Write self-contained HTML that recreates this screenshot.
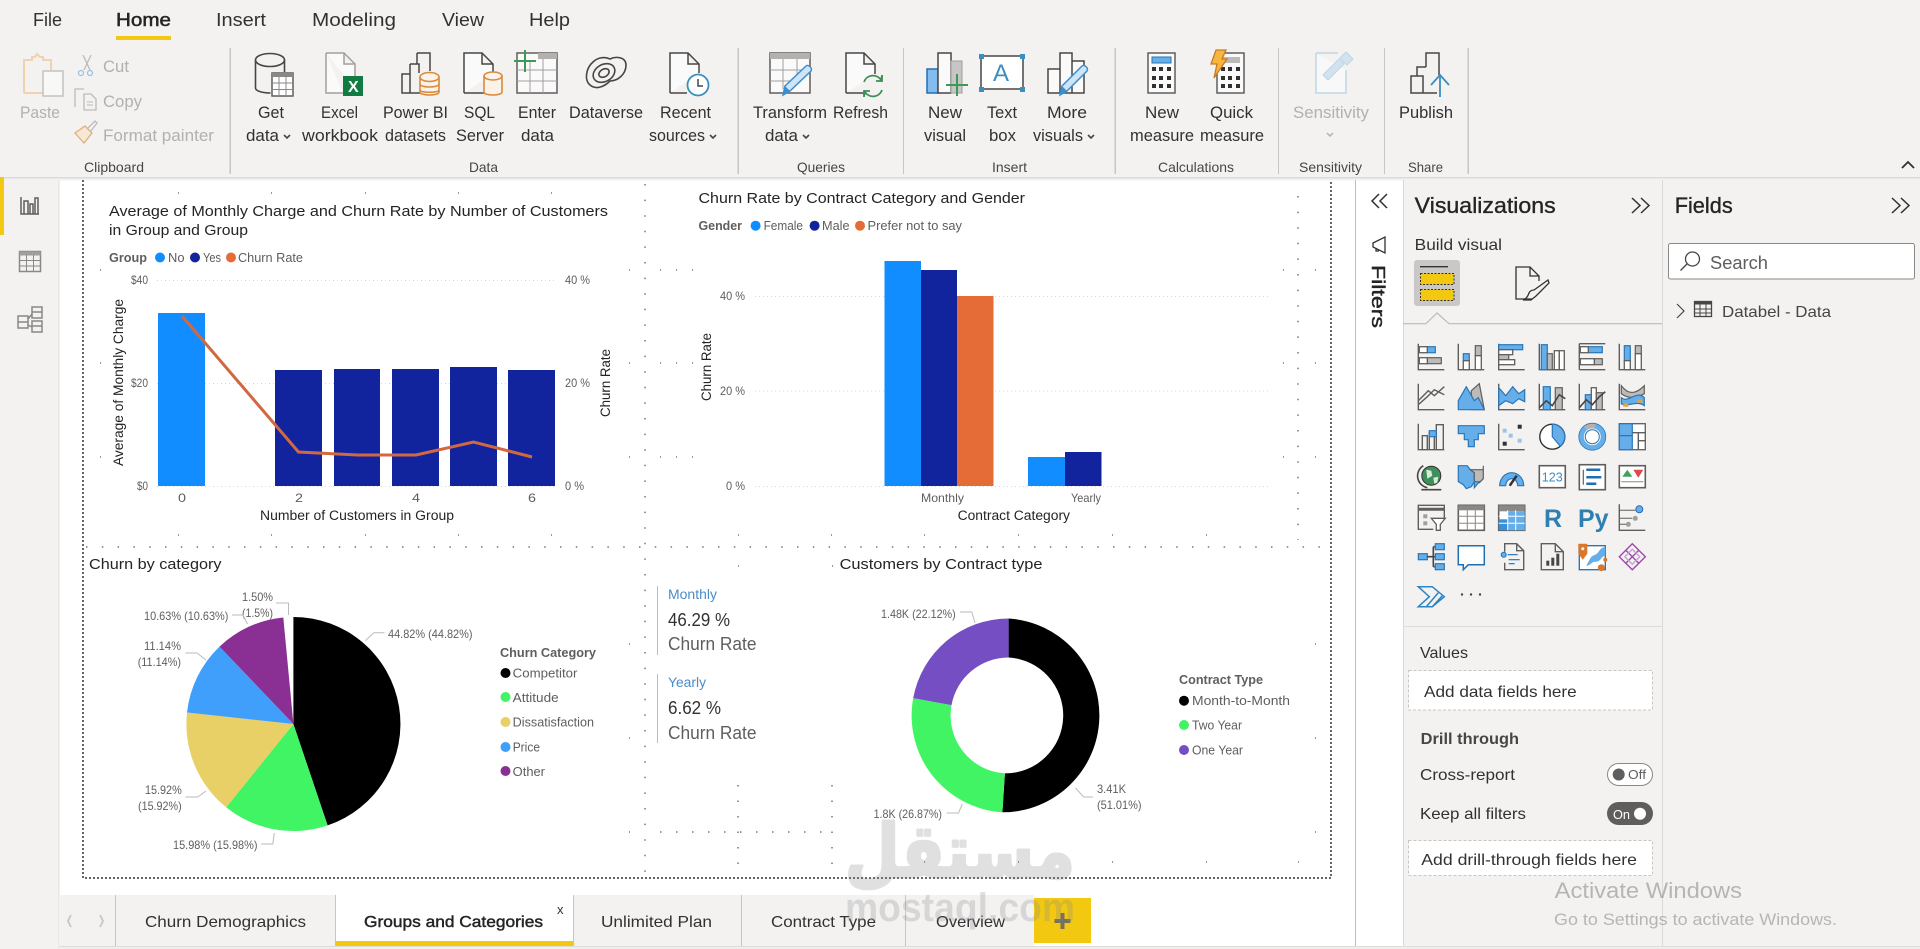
<!DOCTYPE html>
<html lang="en"><head><meta charset="utf-8"><title>Power BI Desktop</title>
<style>
html,body{margin:0;padding:0;width:1920px;height:949px;overflow:hidden;background:#fff}
svg{display:block}
text{font-family:"Liberation Sans","DejaVu Sans",sans-serif;fill:#323130}
.tab{font-size:18px}.lb{font-size:16.5px}.gr{font-size:14px;fill:#484644}.dis{fill:#b3b0ad}
.ti{font-size:15px;fill:#252423}.lg{font-size:12.5px;fill:#605e5c}.lgb{font-size:12.5px;font-weight:bold;fill:#605e5c}
.ax{font-size:12px;fill:#605e5c}.at{font-size:13.5px;fill:#252423}.pl{font-size:12px;fill:#605e5c}
.md{stroke:#252423;stroke-width:.35;fill:#252423}
.ld{fill:none;stroke:#bdbbb9;stroke-width:1}
.grid{stroke:#d5d5d5;stroke-width:1;stroke-dasharray:1 3}
.dt{stroke:#666;stroke-width:1.5;fill:none}
.i{fill:none;stroke:#605e5c;stroke-width:1.4}
.id{fill:none;stroke:#484644;stroke-width:1.6}
.w{fill:#fff;stroke:#605e5c;stroke-width:1.3}
.b{fill:#65aeea;stroke:#2a76b5;stroke-width:1.2}
.g{fill:#bdbbb9;stroke:#605e5c;stroke-width:1.2}
.or{fill:#fbf3ea;stroke:#d98a3c;stroke-width:1.6}
.s{font-size:16px}
</style></head><body>
<svg width="1920" height="949" viewBox="0 0 1920 949" xmlns="http://www.w3.org/2000/svg">
<rect width="1920" height="949" fill="#fff"/>
<!-- ribbon -->
<rect x="0" y="0" width="1920" height="177" fill="#f3f2f1"/>
<rect x="0" y="177" width="1920" height="1.5" fill="#dcdbda"/>
<rect x="0" y="178.5" width="1920" height="2" fill="#f2f2f2"/>
<text x="33" y="26" class="tab" textLength="29" lengthAdjust="spacingAndGlyphs">File</text>
<text x="116" y="26" class="tab md" style="stroke-width:.5" textLength="55" lengthAdjust="spacingAndGlyphs">Home</text>
<text x="216" y="26" class="tab" textLength="50" lengthAdjust="spacingAndGlyphs">Insert</text>
<text x="312" y="26" class="tab" textLength="84" lengthAdjust="spacingAndGlyphs">Modeling</text>
<text x="442" y="26" class="tab" textLength="42" lengthAdjust="spacingAndGlyphs">View</text>
<text x="529" y="26" class="tab" textLength="41" lengthAdjust="spacingAndGlyphs">Help</text>
<rect x="116" y="36" width="55" height="4" fill="#f2c811"/>
<!-- separators -->
<g fill="#c8c6c4"><rect x="229.5" y="48" width="1.5" height="126"/><rect x="737.5" y="48" width="1.5" height="126"/><rect x="903" y="48" width="1" height="126"/><rect x="1114.5" y="48" width="1.5" height="126"/><rect x="1278" y="48" width="1" height="126"/><rect x="1384" y="48" width="1" height="126"/><rect x="1467.5" y="48" width="1.5" height="126"/></g>
<!-- clipboard -->
<path d="M24 93V60h8v-3h3l2-3 3 3h3v3h8v10" fill="none" stroke="#efd3b0" stroke-width="2"/><path d="M24 93h19" stroke="#efd3b0" stroke-width="2"/>
<rect x="43" y="71" width="20" height="25" fill="#f8f8f7" stroke="#c4c2c0" stroke-width="1.5"/>
<text x="20" y="118" class="lb dis" textLength="40" lengthAdjust="spacingAndGlyphs">Paste</text>
<path d="M83 55l7 15M91 55l-7 15" stroke="#bdbbb9" stroke-width="1.3" fill="none"/><circle cx="81" cy="73" r="2.5" fill="none" stroke="#9cc3e0" stroke-width="1.3"/><circle cx="90" cy="73" r="2.5" fill="none" stroke="#9cc3e0" stroke-width="1.3"/>
<text x="103" y="72" class="lb dis" textLength="26" lengthAdjust="spacingAndGlyphs">Cut</text>
<path d="M75 107V89h9M84 94h7l5 5v11H84z" fill="none" stroke="#bdbbb9" stroke-width="1.3"/><path d="M87 102h6M87 105h6" stroke="#bdbbb9"/>
<text x="103" y="107" class="lb dis" textLength="39" lengthAdjust="spacingAndGlyphs">Copy</text>
<path d="M75 133l10-7 7 7-8 10z" fill="#f7e8d6" stroke="#e0b078" stroke-width="1.3"/><path d="M87 129l8-8 2 2-7 9" fill="none" stroke="#bdbbb9" stroke-width="1.3"/>
<text x="103" y="141" class="lb dis" textLength="111" lengthAdjust="spacingAndGlyphs">Format painter</text>
<text x="84" y="172" class="gr" textLength="60" lengthAdjust="spacingAndGlyphs">Clipboard</text>
<!-- get data -->
<path d="M255.5 60v28c0 3 7 5 15 5" class="id" /><ellipse cx="270" cy="60" rx="14.5" ry="6.5" class="id" fill="#fff"/><path d="M284.5 60v12" class="id"/>
<rect x="272" y="73" width="21" height="23" fill="#fff" stroke="#605e5c" stroke-width="1.5"/><rect x="272" y="73" width="21" height="4" fill="#8a8886"/><path d="M272 83h21M272 89.500h21M279 77v19M286 77v19" stroke="#8a8886" fill="none"/>
<text x="258" y="118" class="lb" textLength="26" lengthAdjust="spacingAndGlyphs">Get</text>
<text x="246" y="141" class="lb" textLength="33" lengthAdjust="spacingAndGlyphs">data</text><path d="M284 135l3 3 3-3" class="id"/>
<!-- excel -->
<path d="M326 53h18l11 11v25M344 53v11h11M326 53v40h17" fill="#fafafa" stroke="#a19f9d" stroke-width="1.5"/>
<rect x="343" y="76" width="20" height="20" fill="#107c41"/><text x="348" y="92" style="font-size:16px;font-weight:bold;fill:#fff">X</text>
<text x="321" y="118" class="lb" textLength="37" lengthAdjust="spacingAndGlyphs">Excel</text>
<text x="302" y="141" class="lb" textLength="76" lengthAdjust="spacingAndGlyphs">workbook</text>
<!-- pbi datasets -->
<path d="M402 74h8v19h-8zM410 64h9v9M417 53h13v18M417 53v11M410 64v10M410 93h10" fill="none" stroke="#484644" stroke-width="1.5"/>
<path d="M420 77v15c0 4 19 4 19 0V77" class="or"/><ellipse cx="429.500" cy="77" rx="9.500" ry="4.500" class="or"/><path d="M420 84c0 4 19 4 19 0M420 90c0 3 19 3 19 0" fill="none" stroke="#d98a3c" stroke-width="1.500"/>
<text x="383" y="118" class="lb" textLength="65" lengthAdjust="spacingAndGlyphs">Power BI</text>
<text x="385" y="141" class="lb" textLength="61" lengthAdjust="spacingAndGlyphs">datasets</text>
<!-- sql -->
<path d="M464 93V53h18l11 11v9M482 53v11h11M464 93h20" fill="#fafafa" stroke="#484644" stroke-width="1.500"/>
<path d="M484 76v16c0 4 18 4 18 0V76" class="or"/><ellipse cx="493" cy="76" rx="9" ry="4" class="or"/>
<text x="464" y="118" class="lb" textLength="31" lengthAdjust="spacingAndGlyphs">SQL</text>
<text x="456" y="141" class="lb" textLength="48" lengthAdjust="spacingAndGlyphs">Server</text>
<!-- enter -->
<rect x="517" y="53" width="40" height="40" fill="#fafafa" stroke="#605e5c" stroke-width="1.500"/><rect x="538" y="53" width="19" height="6" fill="#b3b0ad"/><path d="M517 70h40M517 81h40M530 60v33M543 59v34" stroke="#a19f9d" fill="none"/>
<path d="M514 61h22M525 50v22" stroke="#3b9a56" stroke-width="2" fill="none"/>
<text x="518" y="118" class="lb" textLength="38" lengthAdjust="spacingAndGlyphs">Enter</text>
<text x="521" y="141" class="lb" textLength="33" lengthAdjust="spacingAndGlyphs">data</text>
<!-- dataverse -->
<path d="M593 62C586 68 584 80 590 85C596 90 604 87 610 81C617 81 626 75 626 65C626 57 616 56 610 59C604 56 597 58 593 62Z" class="id"/><ellipse cx="604" cy="73" rx="11.500" ry="8.500" transform="rotate(-30 604 73)" class="id"/><ellipse cx="604" cy="73" rx="5.500" ry="3.800" transform="rotate(-30 604 73)" class="id"/>
<text x="569" y="118" class="lb" textLength="74" lengthAdjust="spacingAndGlyphs">Dataverse</text>
<!-- recent -->
<path d="M670 93V53h18l11 11v9M688 53v11h11M670 93h17" fill="#fafafa" stroke="#484644" stroke-width="1.500"/>
<circle cx="698" cy="85" r="10.500" fill="#fff" stroke="#3a8fbf" stroke-width="1.800"/><path d="M698 79v7h5" fill="none" stroke="#484644" stroke-width="1.500"/>
<text x="660" y="118" class="lb" textLength="51" lengthAdjust="spacingAndGlyphs">Recent</text>
<text x="649" y="141" class="lb" textLength="56" lengthAdjust="spacingAndGlyphs">sources</text><path d="M710 135l3 3 3-3" class="id"/>
<text x="469" y="172" class="gr" textLength="29" lengthAdjust="spacingAndGlyphs">Data</text>
<!-- transform -->
<rect x="770" y="53" width="40" height="40" fill="#fafafa" stroke="#605e5c" stroke-width="1.500"/><rect x="770" y="53" width="40" height="6" fill="#b3b0ad"/><path d="M770 70h40M770 81h27M783 59v30M797 59v22" stroke="#a19f9d" fill="none"/>
<path d="M783 95l2-9 21-20c2-2 7 2 5 5l-21 20z" fill="#cfe4f7" stroke="#3a8fd0" stroke-width="1.500"/><path d="M783 95l2-9 5 5z" fill="#3a8fd0"/>
<text x="753" y="118" class="lb" textLength="74" lengthAdjust="spacingAndGlyphs">Transform</text>
<text x="765" y="141" class="lb" textLength="33" lengthAdjust="spacingAndGlyphs">data</text><path d="M803 135l3 3 3-3" class="id"/>
<!-- refresh -->
<path d="M846 93V53h18l11 11v10M864 53v11h11M846 93h18" fill="#fafafa" stroke="#484644" stroke-width="1.500"/>
<path d="M864 82a9.500 9.500 0 0 1 17-2l1-4M882 90a9.500 9.500 0 0 1-17 2l-1 4" fill="none" stroke="#3b8f55" stroke-width="1.800"/><path d="M882 75v6h-6M864 97v-6h6" fill="none" stroke="#3b8f55" stroke-width="1.800"/>
<text x="833" y="118" class="lb" textLength="55" lengthAdjust="spacingAndGlyphs">Refresh</text>
<text x="797" y="172" class="gr" textLength="48" lengthAdjust="spacingAndGlyphs">Queries</text>
<!-- new visual -->
<rect x="927" y="69" width="11" height="24" fill="#83bdf0" stroke="#1f6fb5" stroke-width="1.500"/><rect x="938" y="53" width="13" height="40" fill="#fafafa" stroke="#484644" stroke-width="1.500"/><rect x="951" y="61" width="11" height="32" fill="#c8c6c4" stroke="#a19f9d"/>
<path d="M946 85h22M957 74v22" stroke="#3b9a56" stroke-width="2" fill="none"/>
<text x="928" y="118" class="lb" textLength="34" lengthAdjust="spacingAndGlyphs">New</text>
<text x="924" y="141" class="lb" textLength="42" lengthAdjust="spacingAndGlyphs">visual</text>
<!-- text box -->
<rect x="981" y="56" width="42" height="33" fill="#fff" stroke="#484644" stroke-width="1.500"/><g fill="#3a8fbf"><rect x="979" y="54" width="5" height="5"/><rect x="1020" y="54" width="5" height="5"/><rect x="979" y="87" width="5" height="5"/><rect x="1020" y="87" width="5" height="5"/></g>
<text x="993" y="81" style="font-size:24px;fill:#3a8fbf">A</text>
<text x="987" y="118" class="lb" textLength="30" lengthAdjust="spacingAndGlyphs">Text</text>
<text x="989" y="141" class="lb" textLength="27" lengthAdjust="spacingAndGlyphs">box</text>
<!-- more visuals -->
<path d="M1048 69h12v24h-12zM1060 53h12v40h-12zM1072 61h12v32h-12z" fill="#fafafa" stroke="#484644" stroke-width="1.500"/>
<path d="M1060 95l2-9 20-20c2-2 7 2 5 5l-20 20z" fill="#cfe4f7" stroke="#3a8fd0" stroke-width="1.500"/><path d="M1060 95l2-9 5 5z" fill="#3a8fd0"/>
<text x="1047" y="118" class="lb" textLength="40" lengthAdjust="spacingAndGlyphs">More</text>
<text x="1033" y="141" class="lb" textLength="50" lengthAdjust="spacingAndGlyphs">visuals</text><path d="M1088 135l3 3 3-3" class="id"/>
<text x="992" y="172" class="gr" textLength="35" lengthAdjust="spacingAndGlyphs">Insert</text>
<!-- new measure -->
<rect x="1148" y="53" width="27" height="40" fill="#fafafa" stroke="#605e5c" stroke-width="1.500"/><rect x="1152" y="57" width="19" height="6" fill="#65aeea" stroke="#2a76b5"/>
<g fill="#323130"><rect x="1152" y="67" width="4" height="4"/><rect x="1159" y="67" width="4" height="4"/><rect x="1167" y="67" width="4" height="4"/><rect x="1152" y="76" width="4" height="4"/><rect x="1159" y="76" width="4" height="4"/><rect x="1167" y="76" width="4" height="4"/><rect x="1152" y="84" width="4" height="4"/><rect x="1159" y="84" width="4" height="4"/><rect x="1167" y="84" width="4" height="4"/></g>
<text x="1145" y="118" class="lb" textLength="34" lengthAdjust="spacingAndGlyphs">New</text>
<text x="1130" y="141" class="lb" textLength="64" lengthAdjust="spacingAndGlyphs">measure</text>
<!-- quick -->
<rect x="1217" y="53" width="27" height="40" fill="#fafafa" stroke="#605e5c" stroke-width="1.500"/><rect x="1223" y="57" width="17" height="6" fill="#bdbbb9"/>
<g fill="#323130"><rect x="1221" y="67" width="4" height="4"/><rect x="1228" y="67" width="4" height="4"/><rect x="1236" y="67" width="4" height="4"/><rect x="1221" y="76" width="4" height="4"/><rect x="1228" y="76" width="4" height="4"/><rect x="1236" y="76" width="4" height="4"/><rect x="1221" y="84" width="4" height="4"/><rect x="1228" y="84" width="4" height="4"/><rect x="1236" y="84" width="4" height="4"/></g>
<path d="M1216 50h10l-4 9h5l-13 19 3-14h-6z" fill="#f6b73c" stroke="#c9792b" stroke-width="1.300"/>
<text x="1210" y="118" class="lb" textLength="43" lengthAdjust="spacingAndGlyphs">Quick</text>
<text x="1200" y="141" class="lb" textLength="64" lengthAdjust="spacingAndGlyphs">measure</text>
<text x="1158" y="172" class="gr" textLength="76" lengthAdjust="spacingAndGlyphs">Calculations</text>
<!-- sensitivity -->
<path d="M1316 53h22M1316 53v40h30V70" fill="#f8f8f8" stroke="#bcd6e6" stroke-width="1.500"/><path d="M1323 75l16-16 5 5-16 16zM1340 58l6-6 7 7-6 6z" fill="#d3e3ed" stroke="#bcd6e6"/>
<text x="1293" y="118" class="lb dis" textLength="76" lengthAdjust="spacingAndGlyphs">Sensitivity</text><path d="M1327 133l3 3 3-3" fill="none" stroke="#b3b0ad" stroke-width="1.500"/>
<text x="1299" y="172" class="gr" textLength="63" lengthAdjust="spacingAndGlyphs">Sensitivity</text>
<!-- publish -->
<path d="M1411 76h12v17h-12zM1417 76v-9h9M1426 67V53h13v22M1423 93h14" fill="none" stroke="#484644" stroke-width="1.500"/>
<path d="M1440 97V75M1431 85l9-10 9 10" fill="none" stroke="#3a8fbf" stroke-width="1.800"/>
<text x="1399" y="118" class="lb" textLength="54" lengthAdjust="spacingAndGlyphs">Publish</text>
<text x="1408" y="172" class="gr" textLength="35" lengthAdjust="spacingAndGlyphs">Share</text>
<path d="M1902 168l6-6 6 6" fill="none" stroke="#323130" stroke-width="1.800"/>
<!-- left nav -->
<rect x="0" y="180" width="59" height="769" fill="#f3f2f1"/><rect x="58.500" y="180" width="1" height="769" fill="#e1dfdd"/>
<rect x="0" y="177" width="4" height="58" fill="#f2c811"/>
<path d="M21 197v17h18M24 201h4v13h-4zM30 204h3v10h-3zM35 198h3v16h-3z" fill="none" stroke="#605e5c" stroke-width="1.500"/>
<rect x="19.500" y="251.500" width="21" height="20" fill="none" stroke="#8a8886" stroke-width="1.500"/><rect x="19.500" y="251.500" width="21" height="4" fill="#a19f9d"/><path d="M19 260.500h22M19 266h22M26.500 255v16M33.500 255v16" stroke="#8a8886" fill="none"/>
<path d="M18 316h10v12H18zM32 307h10v11H32zM32 321h10v11H32zM28 319l4-5M28 325l4 2M18 322h10M32 312h10M32 326h10" fill="none" stroke="#8a8886" stroke-width="1.500"/>
<!-- canvas guides -->
<path class="dt" style="stroke-width:2;stroke-dasharray:2 2" d="M83 180V878H1331V180"/>
<g fill="none" stroke="#777" stroke-width="1.500">
<path d="M645 184V876" stroke-dasharray="1.500 14.100"/>
<path d="M86 547H1330" stroke-dasharray="1.500 14.300"/>
<path d="M178 193h1M271 193h1M365 193h1M458 193h1M551 193h1M178 535h1M271 535h1M365 535h1M458 535h1M551 535h1M100 270h1M100 363h1M100 457h1M629 270h1M629 363h1M629 457h1"/>
<path d="M660 270h1M676 270h1M692 270h1M660 363h1M676 363h1M692 363h1M660 457h1M676 457h1M692 457h1M1283 270h1M1315 270h1M1283 363h1M1315 363h1M1283 457h1M1315 457h1"/>
<path d="M1298 196V540" stroke-dasharray="1.500 14.100"/>
<path d="M738 535h1M831 535h1M924 535h1M1018 535h1M1112 535h1M1206 535h1"/>
<path d="M629 644h1M629 738h1M629 832h1M738 566h1M832 566h1M1315 644h1M1315 738h1M1315 832h1"/>
<path d="M738 785V870M832 785V870" stroke-dasharray="1.500 14"/>
<path d="M660 832H830" stroke-dasharray="1.500 14.500"/>
<path d="M924 862h1M1018 862h1M1112 862h1M1206 862h1M1298 862h1"/>
</g>
<!-- chart 1 -->
<text x="109" y="216" class="ti" textLength="499" lengthAdjust="spacingAndGlyphs">Average of Monthly Charge and Churn Rate by Number of Customers</text>
<text x="109" y="235" class="ti" textLength="139" lengthAdjust="spacingAndGlyphs">in Group and Group</text>
<text x="109" y="262" class="lgb" textLength="38" lengthAdjust="spacingAndGlyphs">Group</text>
<circle cx="160" cy="257.500" r="5" fill="#118dff"/><text x="168" y="262" class="lg" textLength="16.500" lengthAdjust="spacingAndGlyphs">No</text>
<circle cx="195" cy="257.500" r="5" fill="#12239e"/><text x="203" y="262" class="lg" textLength="18" lengthAdjust="spacingAndGlyphs">Yes</text>
<circle cx="231" cy="257.500" r="5" fill="#e66c37"/><text x="238" y="262" class="lg" textLength="65" lengthAdjust="spacingAndGlyphs">Churn Rate</text>
<path class="grid" d="M157 280.500H556M157 383.500H556M157 486.500H556"/>
<text x="131" y="284" class="ax" textLength="17" lengthAdjust="spacingAndGlyphs">$40</text>
<text x="131" y="387" class="ax" textLength="17" lengthAdjust="spacingAndGlyphs">$20</text>
<text x="137" y="490" class="ax" textLength="11" lengthAdjust="spacingAndGlyphs">$0</text>
<text x="565" y="284" class="ax" textLength="25" lengthAdjust="spacingAndGlyphs">40 %</text>
<text x="565" y="387" class="ax" textLength="25" lengthAdjust="spacingAndGlyphs">20 %</text>
<text x="565" y="490" class="ax" textLength="19" lengthAdjust="spacingAndGlyphs">0 %</text>
<rect x="158" y="313" width="47" height="173" fill="#118dff"/>
<g fill="#12239e"><rect x="275" y="370" width="47" height="116"/><rect x="334" y="369" width="46" height="117"/><rect x="392" y="369" width="47" height="117"/><rect x="450" y="367" width="47" height="119"/><rect x="508" y="370" width="47" height="116"/></g>
<polyline points="182,316 298.500,452 357.400,455 416,455 473.500,442 532,457" fill="none" stroke="#d2683f" stroke-width="3"/>
<text x="178" y="502" class="ax" textLength="8" lengthAdjust="spacingAndGlyphs">0</text><text x="295" y="502" class="ax" textLength="8" lengthAdjust="spacingAndGlyphs">2</text><text x="412" y="502" class="ax" textLength="8" lengthAdjust="spacingAndGlyphs">4</text><text x="528" y="502" class="ax" textLength="8" lengthAdjust="spacingAndGlyphs">6</text>
<text x="260" y="520" class="at" textLength="194" lengthAdjust="spacingAndGlyphs">Number of Customers in Group</text>
<text transform="translate(123,466) rotate(-90)" class="at" textLength="167" lengthAdjust="spacingAndGlyphs">Average of Monthly Charge</text>
<text transform="translate(610,417) rotate(-90)" class="at" textLength="68" lengthAdjust="spacingAndGlyphs">Churn Rate</text>
<!-- chart 2 -->
<text x="698.500" y="203" class="ti" textLength="326.500" lengthAdjust="spacingAndGlyphs">Churn Rate by Contract Category and Gender</text>
<text x="698.500" y="230" class="lgb" textLength="43.500" lengthAdjust="spacingAndGlyphs">Gender</text>
<circle cx="755.600" cy="225.700" r="5" fill="#118dff"/><text x="763.600" y="230" class="lg" textLength="39.400" lengthAdjust="spacingAndGlyphs">Female</text>
<circle cx="814.600" cy="225.700" r="5" fill="#12239e"/><text x="822" y="230" class="lg" textLength="27.500" lengthAdjust="spacingAndGlyphs">Male</text>
<circle cx="860" cy="225.700" r="5" fill="#e66c37"/><text x="867.500" y="230" class="lg" textLength="94.500" lengthAdjust="spacingAndGlyphs">Prefer not to say</text>
<path class="grid" d="M755 296.500H1270M755 391H1270M755 486.500H1270"/>
<text x="720" y="300" class="ax" textLength="25" lengthAdjust="spacingAndGlyphs">40 %</text><text x="720" y="395" class="ax" textLength="25" lengthAdjust="spacingAndGlyphs">20 %</text><text x="726" y="490" class="ax" textLength="19" lengthAdjust="spacingAndGlyphs">0 %</text>
<rect x="884.500" y="261" width="36.500" height="225" fill="#118dff"/><rect x="921" y="270" width="36" height="216" fill="#12239e"/><rect x="957" y="296" width="36.500" height="190" fill="#e66c37"/>
<rect x="1028" y="457" width="37" height="29" fill="#118dff"/><rect x="1065" y="452" width="36.500" height="34" fill="#12239e"/>
<text x="921" y="502" class="ax" textLength="43" lengthAdjust="spacingAndGlyphs">Monthly</text><text x="1071" y="502" class="ax" textLength="30" lengthAdjust="spacingAndGlyphs">Yearly</text>
<text x="957.600" y="520" class="at" textLength="112.400" lengthAdjust="spacingAndGlyphs">Contract Category</text>
<text transform="translate(711,401) rotate(-90)" class="at" textLength="68" lengthAdjust="spacingAndGlyphs">Churn Rate</text>
<!-- pie -->
<text x="89" y="569" class="ti" textLength="132.500" lengthAdjust="spacingAndGlyphs">Churn by category</text>
<path d="M293.400 724V617A107 107 0 0 1 327.600 825.400Z" fill="#000"/>
<path d="M293.400 724L327.600 825.400A107 107 0 0 1 226.200 807.300Z" fill="#41f463"/>
<path d="M293.400 724L226.200 807.300A107 107 0 0 1 187 712.500Z" fill="#e8cf66"/>
<path d="M293.400 724L187 712.500A107 107 0 0 1 219.500 646.600Z" fill="#3f9ffb"/>
<path d="M293.400 724L219.500 646.600A107 107 0 0 1 283.300 617.500Z" fill="#8a3094"/>
<text x="388" y="638" class="pl" textLength="84.500" lengthAdjust="spacingAndGlyphs">44.82% (44.82%)</text>
<path class="ld" d="M365.400 640.700L373.800 632.700H384.500"/>
<text x="242" y="601" class="pl" textLength="31" lengthAdjust="spacingAndGlyphs">1.50%</text><text x="242" y="617" class="pl" textLength="31" lengthAdjust="spacingAndGlyphs">(1.5%)</text>
<path class="ld" d="M276 603H288.500V615"/>
<text x="144" y="620" class="pl" textLength="84.400" lengthAdjust="spacingAndGlyphs">10.63% (10.63%)</text>
<path class="ld" d="M232 615H243L247.500 624"/>
<text x="144" y="650" class="pl" textLength="37" lengthAdjust="spacingAndGlyphs">11.14%</text><text x="137.700" y="666" class="pl" textLength="43.300" lengthAdjust="spacingAndGlyphs">(11.14%)</text>
<path class="ld" d="M185.500 653H197L206 660"/>
<text x="145" y="794" class="pl" textLength="36.700" lengthAdjust="spacingAndGlyphs">15.92%</text><text x="138" y="810" class="pl" textLength="43.700" lengthAdjust="spacingAndGlyphs">(15.92%)</text>
<path class="ld" d="M185.500 797H197.800L206 791"/>
<text x="173" y="849" class="pl" textLength="84.500" lengthAdjust="spacingAndGlyphs">15.98% (15.98%)</text>
<path class="ld" d="M261 844H272.800L274.300 833"/>
<text x="500" y="657" class="lgb" textLength="96" lengthAdjust="spacingAndGlyphs">Churn Category</text>
<circle cx="505.500" cy="673" r="5" fill="#000"/><text x="512.700" y="677.500" class="lg" textLength="64.700" lengthAdjust="spacingAndGlyphs">Competitor</text>
<circle cx="505.500" cy="697" r="5" fill="#41f463"/><text x="512.700" y="702" class="lg" textLength="46" lengthAdjust="spacingAndGlyphs">Attitude</text>
<circle cx="505.500" cy="722" r="5" fill="#e8cf66"/><text x="512.700" y="726.500" class="lg" textLength="81.300" lengthAdjust="spacingAndGlyphs">Dissatisfaction</text>
<circle cx="505.500" cy="747" r="5" fill="#3f9ffb"/><text x="512.700" y="751.500" class="lg" textLength="27.300" lengthAdjust="spacingAndGlyphs">Price</text>
<circle cx="505.500" cy="771" r="5" fill="#8a3094"/><text x="512.700" y="776" class="lg" textLength="32.300" lengthAdjust="spacingAndGlyphs">Other</text>
<!-- kpi -->
<rect x="657" y="586" width="1" height="69" fill="#bbb"/><rect x="657" y="674" width="1" height="69" fill="#bbb"/>
<text x="668" y="599" style="font-size:13.500px;fill:#4a8cc8" textLength="49" lengthAdjust="spacingAndGlyphs">Monthly</text>
<text x="668" y="626" style="font-size:18px;fill:#323130" textLength="62" lengthAdjust="spacingAndGlyphs">46.29 %</text>
<text x="668" y="650" style="font-size:18px;fill:#605e5c" textLength="88.500" lengthAdjust="spacingAndGlyphs">Churn Rate</text>
<text x="668" y="687" style="font-size:13.500px;fill:#4a8cc8" textLength="38" lengthAdjust="spacingAndGlyphs">Yearly</text>
<text x="668" y="714" style="font-size:18px;fill:#323130" textLength="53" lengthAdjust="spacingAndGlyphs">6.62 %</text>
<text x="668" y="739" style="font-size:18px;fill:#605e5c" textLength="88.500" lengthAdjust="spacingAndGlyphs">Churn Rate</text>
<!-- donut -->
<text x="839.600" y="569" class="ti" textLength="202.900" lengthAdjust="spacingAndGlyphs">Customers by Contract type</text>
<path d="M1008.600 618.500A97 97 0 0 1 1002.400 812.300L1004.900 773.400A58 58 0 0 0 1008.600 657.500Z" fill="#000"/>
<path d="M1002.400 812.300A97 97 0 0 1 913.200 698.100L951.500 705.100A58 58 0 0 0 1004.900 773.400Z" fill="#41f463"/>
<path d="M913.200 698.100A97 97 0 0 1 1008.600 618.500V657.500A58 58 0 0 0 951.500 705.100Z" fill="#744ec2"/>
<text x="881" y="618" class="pl" textLength="74.700" lengthAdjust="spacingAndGlyphs">1.48K (22.12%)</text><path class="ld" d="M960 612H971.800L975 623"/>
<text x="873.600" y="818" class="pl" textLength="68.400" lengthAdjust="spacingAndGlyphs">1.8K (26.87%)</text><path class="ld" d="M946.700 813H958.500L962.300 804"/>
<text x="1097" y="793" class="pl" textLength="29" lengthAdjust="spacingAndGlyphs">3.41K</text><text x="1097" y="809" class="pl" textLength="44.600" lengthAdjust="spacingAndGlyphs">(51.01%)</text><path class="ld" d="M1075.600 788L1083.600 797H1093"/>
<text x="1179" y="684" class="lgb" textLength="84" lengthAdjust="spacingAndGlyphs">Contract Type</text>
<circle cx="1184" cy="700.700" r="5" fill="#000"/><text x="1192" y="705" class="lg" textLength="98" lengthAdjust="spacingAndGlyphs">Month-to-Month</text>
<circle cx="1184" cy="725" r="5" fill="#41f463"/><text x="1192" y="729.500" class="lg" textLength="50" lengthAdjust="spacingAndGlyphs">Two Year</text>
<circle cx="1184" cy="750" r="5" fill="#744ec2"/><text x="1192" y="754.500" class="lg" textLength="51" lengthAdjust="spacingAndGlyphs">One Year</text>
<!-- tabs -->
<rect x="59" y="895" width="975" height="52" fill="#f3f2f1"/>
<rect x="335" y="895" width="238" height="46" fill="#fff"/><rect x="335" y="941" width="238" height="5" fill="#f2c811"/>
<g fill="#c8c6c4"><rect x="115" y="895" width="1" height="52"/><rect x="335" y="895" width="1" height="46"/><rect x="573" y="895" width="1" height="52"/><rect x="741" y="895" width="1" height="52"/><rect x="905" y="895" width="1" height="52"/></g>
<path d="M71 915l-3 6 3 6M100 915l3 6-3 6" fill="none" stroke="#c8c6c4" stroke-width="1.800"/>
<text x="145" y="927" class="s" textLength="161" lengthAdjust="spacingAndGlyphs">Churn Demographics</text>
<text x="364" y="927" class="s md" style="stroke-width:.45" textLength="179" lengthAdjust="spacingAndGlyphs">Groups and Categories</text>
<text x="557" y="914" style="font-size:13px;fill:#323130">x</text>
<text x="601" y="927" class="s" textLength="111" lengthAdjust="spacingAndGlyphs">Unlimited Plan</text>
<text x="771" y="927" class="s" textLength="105" lengthAdjust="spacingAndGlyphs">Contract Type</text>
<text x="936" y="927" class="s" textLength="69" lengthAdjust="spacingAndGlyphs">Overview</text>
<rect x="1034" y="898" width="57" height="45" fill="#f2c811"/>
<path d="M1062.500 913v16M1054.500 921h16" stroke="#757061" stroke-width="4" fill="none"/>
<rect x="59" y="947" width="1861" height="2" fill="#f0efee"/><rect x="59" y="946" width="1861" height="1" fill="#dedcda"/>
<!-- filters pane -->
<rect x="1355" y="180" width="1" height="766" fill="#c0bebc"/>
<path d="M1379 194l-7 7 7 7M1387 194l-7 7 7 7" fill="none" stroke="#323130" stroke-width="1.500"/>
<path d="M1373 243l12-6v16l-12-6zM1376 248v3h3" fill="none" stroke="#323130" stroke-width="1.300"/>
<text transform="translate(1372,265) rotate(90)" class="md" style="font-size:18px;stroke-width:.45" textLength="63" lengthAdjust="spacingAndGlyphs">Filters</text>
<!-- viz pane -->
<rect x="1403" y="180" width="517" height="766" fill="#f3f2f1"/>
<rect x="1403" y="180" width="1" height="766" fill="#dcdad8"/><rect x="1662" y="180" width="1" height="766" fill="#dcdad8"/>
<text x="1414.700" y="213" class="md" style="font-size:22px" textLength="141" lengthAdjust="spacingAndGlyphs">Visualizations</text>
<path d="M1632 198l8 7.500-8 7.500M1641 198l8 7.500-8 7.500" fill="none" stroke="#323130" stroke-width="1.500"/>
<text x="1674.700" y="213" class="md" style="font-size:22px" textLength="58" lengthAdjust="spacingAndGlyphs">Fields</text>
<path d="M1892 198l8 7.500-8 7.500M1901 198l8 7.500-8 7.500" fill="none" stroke="#323130" stroke-width="1.500"/>
<text x="1414.700" y="250" style="font-size:16px;fill:#323130" textLength="87.300" lengthAdjust="spacingAndGlyphs">Build visual</text>
<rect x="1414" y="260" width="46" height="46" rx="3" fill="#c9c8c7"/>
<path d="M1420 266.700h28" stroke="#323130" stroke-width="1.300"/>
<rect x="1420.500" y="273.500" width="33.500" height="11" fill="#f2c811" stroke="#323130" stroke-dasharray="2 1.500"/><rect x="1420.500" y="289.500" width="33.500" height="11" fill="#f2c811" stroke="#323130" stroke-dasharray="2 1.500"/>
<path d="M1532 299h-16v-32h14l9 9v5M1530 267v9h9" fill="none" stroke="#323130" stroke-width="1.300"/>
<path d="M1548 280l1 3-13 13-5 4h-8c3-1 5-4 6-7 1-2 3-3 5-3z" fill="none" stroke="#323130" stroke-width="1.300"/>
<path d="M1403 323.700h23l11-10.700 12 10.700h213" fill="none" stroke="#bdbbb9" stroke-width="1.200"/>
<!-- viz icons -->
<g transform="translate(1431.300,356.700)"><path class="i" d="M-13-13V13H13"/><rect class="b" x="-4" y="-10" width="8" height="6"/><rect class="w" x="-12" y="-10" width="8" height="6"/><rect class="g" x="-4" y="1" width="14" height="6"/><rect class="w" x="-12" y="1" width="8" height="6"/></g>
<g transform="translate(1471.300,356.700)"><path class="i" d="M-13-13V13H13"/><rect class="b" x="-8" y="-3" width="6" height="7"/><rect class="w" x="-8" y="4" width="6" height="9"/><rect class="g" x="4" y="-11" width="6" height="10"/><rect class="w" x="4" y="-1" width="6" height="14"/></g>
<g transform="translate(1511.700,356.700)"><path class="i" d="M-13-13V13H13"/><rect class="b" x="-13" y="-12" width="24" height="5"/><rect class="w" x="-13" y="-7" width="14" height="5"/><rect class="g" x="-13" y="-2" width="10" height="5"/><rect class="w" x="-13" y="3" width="16" height="5"/></g>
<g transform="translate(1552.300,356.700)"><path class="i" d="M-13-13V13H13"/><rect class="b" x="-11" y="-12" width="6" height="25"/><rect class="g" x="-5" y="-3" width="5" height="16"/><rect class="w" x="2" y="-6" width="5" height="19"/><rect class="w" x="7" y="-6" width="5" height="19"/></g>
<g transform="translate(1592.300,356.700)"><path class="i" d="M-13-13H13M-13 13H13M-13-13V13"/><rect class="b" x="-4" y="-10" width="14" height="6"/><rect class="w" x="-12" y="-10" width="8" height="6"/><rect class="g" x="2" y="2" width="8" height="6"/><rect class="w" x="-12" y="2" width="14" height="6"/></g>
<g transform="translate(1632.300,356.700)"><path class="i" d="M-13-13V13H13"/><rect class="b" x="-8" y="-11" width="6" height="15"/><rect class="w" x="-8" y="4" width="6" height="9"/><rect class="g" x="3" y="-11" width="6" height="8"/><rect class="w" x="3" y="-3" width="6" height="16"/></g>
<g transform="translate(1431.300,396.700)"><path class="i" d="M-13-13V13H13"/><path class="i" d="M-13 4L-3-6 3-1 13-10M-13 8L-4 0 3-7 13-2"/></g>
<g transform="translate(1471.300,396.700)"><path class="g" d="M0-6L8-13 13 13H0z"/><path class="b" d="M-13 13V4L-5-10 3 4 7 1 13 13z"/></g>
<g transform="translate(1511.700,396.700)"><path class="i" d="M-13-13V13H13"/><path class="b" d="M-13-9L-6-1 1-10 7-3 13-7V5L7 2 1 7-6 4-13 9z"/></g>
<g transform="translate(1552.300,396.700)"><path class="i" d="M-13-13V13H13"/><rect class="b" x="-9" y="-10" width="7" height="23"/><rect class="g" x="3" y="-9" width="7" height="22"/><path class="id" d="M-13 11L-6 4 0 9 7-2 13 2"/></g>
<g transform="translate(1592.300,396.700)"><path class="i" d="M-13-13V13H13"/><rect class="b" x="-7" y="-2" width="6" height="15"/><rect class="w" x="-1" y="-9" width="5" height="22"/><rect class="g" x="4" y="-4" width="6" height="17"/><path class="id" d="M-13 11L-6 3 0 8 7 0 13-5"/></g>
<g transform="translate(1632.300,396.700)"><path class="i" d="M-13-13V13H13"/><path class="g" d="M-11-11C-4-2 3-2 12-11V-3C3 2-4 2-11-3z"/><path class="b" d="M-11 1C-4 7 4-7 12 1V9C4 3-4 11-11 7z"/><rect x="-9" y="7" width="5" height="3" fill="#e8a33c"/><rect x="5" y="3" width="5" height="3" fill="#e8a33c"/></g>
<g transform="translate(1431.300,436.700)"><path class="i" d="M-13-13V13H13M-9 13V-1h5V13M-2 13V-4h5V13M5 13V-12h7V13"/><rect class="b" x="-2" y="-6" width="7" height="6"/></g>
<g transform="translate(1471.300,436.700)"><path class="b" d="M-13-11H13V-3H7V3H3V10H-3V3H-7V-3H-13z"/></g>
<g transform="translate(1511.700,436.700)"><path class="i" d="M-13-13V13H13"/><g fill="#9cc3e6"><rect x="-9" y="-8" width="4" height="4"/><rect x="-3" y="-3" width="4" height="4"/><rect x="6" y="2" width="4" height="4"/></g><g fill="#323130"><rect x="6" y="-12" width="4" height="4"/><rect x="-9" y="5" width="4" height="4"/></g></g>
<g transform="translate(1552.300,436.700)"><circle r="12.500" fill="#fff" stroke="#323130" stroke-width="1.400"/><path class="b" d="M0 0V-12.500A12.500 12.500 0 0 1 8 9.600Z"/></g>
<g transform="translate(1592.300,436.700)"><circle r="11" fill="none" stroke="#65aeea" stroke-width="5"/><path d="M-7-8.500A11 11 0 0 1 3-10.600" fill="none" stroke="#b3b0ad" stroke-width="5"/><circle r="7" fill="#fff" stroke="#2a76b5"/><circle r="13.500" fill="none" stroke="#2a76b5" stroke-width=".8"/></g>
<g transform="translate(1632.300,436.700)"><rect class="w" x="-13" y="-13" width="26" height="26"/><rect class="b" x="-13" y="-13" width="13" height="12"/><rect class="b" x="-13" y="-1" width="13" height="14"/><path class="i" d="M0-4H13M6-4V13M6 4H13"/></g>
<g transform="translate(1431.300,476.700)"><circle cy="-1" r="9.500" fill="#3f8f5a" stroke="#323130"/><path d="M-5-7l5 1 1 5-5 3zM2 1l5-1-1 6-3 1z" fill="#d9ead9"/><path class="id" d="M-8-11A12 12 0 0 0 -4 11M-10 13H10"/></g>
<g transform="translate(1471.300,476.700)"><path class="b" d="M-13-11H-4L-1-7 3-4V5L0 10-5 12-8 8-13 5z"/><path class="g" d="M-1-7H12V-11 2L8 6 3 5 3-4z"/><path class="b" d="M3 5L8 5 3 11z"/></g>
<g transform="translate(1511.700,476.700)"><path class="b" d="M-12 9A12 13 0 0 1 12 9H6A6 7 0 0 0-6 9z"/><path d="M-2 9L5-1" stroke="#323130" stroke-width="2.500"/></g>
<g transform="translate(1552.300,476.700)"><rect class="w" x="-13" y="-11" width="26" height="22" style="stroke-width:1.600"/><text x="-10.500" y="5" style="font-size:13px;fill:#3a8fbf" textLength="21" lengthAdjust="spacingAndGlyphs">123</text></g>
<g transform="translate(1592.300,476.700)"><rect class="w" x="-13" y="-12" width="26" height="25" style="stroke-width:1.600"/><path d="M-9-7V8" stroke="#605e5c" stroke-width="1.200"/><path d="M-6-7H8M-6 0.500H9M-6 7H4" stroke="#1f6fb5" stroke-width="2.500"/></g>
<g transform="translate(1632.300,476.700)"><rect class="w" x="-13" y="-11" width="26" height="22" style="stroke-width:1.600"/><path d="M-10 0L-5-7 0 0z" fill="#3fa35a"/><path d="M1-7H11L6 1z" fill="#d84c4c"/><path d="M-11 5H11" stroke="#8a8886"/></g>
<g transform="translate(1431.300,517.300)"><path class="i" d="M2 12H-13V-12H13V1"/><path d="M-13-8H13" stroke="#605e5c" stroke-width="3"/><rect x="-8" y="-3" width="4" height="4" fill="#a19f9d"/><rect x="-8" y="4" width="4" height="4" fill="#a19f9d"/><path class="w" d="M0 1H14L9 7V13H5V7z"/></g>
<g transform="translate(1471.300,517.300)"><rect class="w" x="-13" y="-12" width="26" height="25" style="stroke-width:1.600"/><rect x="-13" y="-12" width="26" height="5" fill="#8a8886"/><path d="M-13-1H13M-13 6H13M-4-7V13M4-7V13" stroke="#8a8886"/></g>
<g transform="translate(1511.700,517.300)"><rect class="w" x="-13" y="-12" width="26" height="25" style="stroke-width:1.600"/><rect x="-13" y="-12" width="26" height="6" fill="#8a8886"/><rect x="-4" y="-6" width="17" height="19" fill="#65aeea"/><rect x="-13" y="2" width="9" height="11" fill="#3a8fd8"/><path d="M-13-1H13M-13 6H13M-4-7V13M4-7V13" stroke="#fff"/></g>
<text x="1544" y="527" style="font-size:25px;font-weight:bold;fill:#2f7fb0">R</text>
<text x="1578" y="527" style="font-size:25px;font-weight:bold;fill:#2f7fb0">Py</text>
<g transform="translate(1632.300,517.300)"><path class="i" d="M-13-13V13H13"/><path d="M-13-7H3M-13 1H0M-13 7H-6" stroke="#605e5c"/><circle cx="7" cy="-8" r="3.500" fill="#65aeea" stroke="#1f6fb5"/><circle cx="3" cy="1" r="2.500" fill="#a19f9d"/><circle cx="-4" cy="7" r="2.500" fill="#a19f9d"/></g>
<g transform="translate(1431.300,556.700)"><rect class="b" x="-13" y="-3" width="9" height="6"/><path class="id" d="M-4 0H2M2-10V10M2-10H4M2 0H4M2 10H4"/><rect class="b" x="4" y="-13" width="9" height="6"/><rect class="b" x="4" y="-3" width="9" height="6"/><rect class="b" x="4" y="7" width="9" height="6"/></g>
<g transform="translate(1471.300,556.700)"><path d="M-13-11H13V8H-3L-8 13V8H-13z" fill="#fff" stroke="#1f6fb5" stroke-width="1.500"/></g>
<g transform="translate(1511.700,556.700)"><path class="i" d="M-7-5V-13H5L12-6V13H-7V6M5-13V-6H12"/><circle cx="-8" cy="-2" r="2.500" fill="#65aeea" stroke="#1f6fb5"/><path d="M-4-2H6M-3 3H8M-3 7H3" stroke="#1f6fb5" stroke-width="1.200"/></g>
<g transform="translate(1552.300,556.700)"><path class="i" d="M-11 13V-13H3L11-5V13zM3-13V-5H11"/><g fill="#484644"><rect x="-6" y="4" width="3" height="5"/><rect x="-1" y="1" width="3" height="8"/><rect x="4" y="-3" width="3" height="12"/></g></g>
<g transform="translate(1592.300,556.700)"><rect class="w" x="-13" y="-11" width="26" height="24" style="stroke:#1f6fb5"/><path d="M-6 9C-1 0-2 0 3-2 8-5 6-8 13-10V-1C8 0 9 5 3 5-1 5-2 9-6 9z" fill="#65aeea"/><path d="M-14-13H-5V-3L-9.500 3-14-3z" fill="#d9772c"/><circle cx="-9.500" cy="-8" r="1.500" fill="#fff"/><circle cx="9" cy="11" r="3.500" fill="#d9772c"/><circle cx="13" cy="3" r="2" fill="#d9772c"/></g>
<g transform="translate(1632.300,556.700)" fill="none" stroke="#9b4aa8" stroke-width="1.400"><path d="M0-13L13 0 0 13-13 0zM-6.500-6.500L6.500 6.500M6.500-6.500L-6.500 6.500"/><path d="M0-7.500L7.500 0 0 7.500-7.500 0z" stroke="#c9a3d0"/></g>
<g transform="translate(1431.300,596.700)" fill="none" stroke="#2a85c5" stroke-width="1.500"><path d="M-13-10H1L13 0 1 10H-13L-2 0z"/><path d="M-5 10L7-4M1 10L11-1"/></g>
<g fill="#484644"><circle cx="1462" cy="594.500" r="1.200"/><circle cx="1471" cy="594.500" r="1.200"/><circle cx="1480" cy="594.500" r="1.200"/></g>
<!-- values etc -->
<rect x="1403" y="626" width="259" height="1" fill="#dedcda"/>
<text x="1420" y="658" class="s" textLength="48" lengthAdjust="spacingAndGlyphs">Values</text>
<rect x="1408.500" y="670.500" width="244" height="39.500" fill="#fff" stroke="#c8c6c4" stroke-dasharray="3 2"/>
<text x="1424" y="697" class="s" textLength="152.700" lengthAdjust="spacingAndGlyphs">Add data fields here</text>
<text x="1420.700" y="744" class="s" style="font-weight:bold;fill:#484644" textLength="98.300" lengthAdjust="spacingAndGlyphs">Drill through</text>
<text x="1420" y="780" class="s" textLength="95" lengthAdjust="spacingAndGlyphs">Cross-report</text>
<rect x="1607.500" y="763.500" width="45" height="22" rx="11" fill="#fff" stroke="#8a8886"/><circle cx="1618.700" cy="774.500" r="6" fill="#605e5c"/><text x="1628" y="779" style="font-size:13px;fill:#605e5c" textLength="18" lengthAdjust="spacingAndGlyphs">Off</text>
<text x="1420" y="819" class="s" textLength="106" lengthAdjust="spacingAndGlyphs">Keep all filters</text>
<rect x="1607" y="802" width="46" height="23" rx="11.500" fill="#605e5c"/><text x="1613" y="819" style="font-size:13px;fill:#fff" textLength="17" lengthAdjust="spacingAndGlyphs">On</text><circle cx="1640" cy="813.700" r="6" fill="#fff"/>
<rect x="1408.500" y="840.500" width="244" height="35" fill="#fff" stroke="#c8c6c4" stroke-dasharray="3 2"/>
<text x="1421.300" y="865" class="s" textLength="215.700" lengthAdjust="spacingAndGlyphs">Add drill-through fields here</text>
<!-- fields -->
<rect x="1668.500" y="243.500" width="246" height="35.500" rx="2" fill="#fff" stroke="#8a8886"/>
<circle cx="1692.500" cy="259" r="7" fill="none" stroke="#484644" stroke-width="1.300"/><path d="M1687 264l-6.500 6.500" stroke="#484644" stroke-width="1.300"/>
<text x="1710" y="269" style="font-size:18px;fill:#605e5c" textLength="58" lengthAdjust="spacingAndGlyphs">Search</text>
<path d="M1677 304l7 7-7 7" fill="none" stroke="#484644" stroke-width="1.200"/>
<rect x="1694.500" y="301.500" width="17" height="15" fill="none" stroke="#484644" stroke-width="1.300"/><rect x="1694.500" y="301.500" width="17" height="3" fill="#484644"/><path d="M1694 309h18M1694 313h18M1700 304v13M1706 304v13" stroke="#484644" fill="none"/>
<text x="1722" y="317" style="font-size:16px;fill:#484644" textLength="109" lengthAdjust="spacingAndGlyphs">Databel - Data</text>
<!-- watermark overlays -->
<g opacity="0.26">
<text x="845" y="877" style="font-family:'DejaVu Sans',sans-serif;font-size:74px;font-weight:bold;fill:#8a8a8a;stroke:#8a8a8a;stroke-width:3;stroke-linejoin:round" textLength="230" lengthAdjust="spacingAndGlyphs">مستقل</text>
<text x="845" y="921" style="font-family:'Liberation Sans',sans-serif;font-size:40px;font-weight:bold;fill:#8a8a8a" textLength="230" lengthAdjust="spacingAndGlyphs">mostaql.com</text>
</g>
<text x="1554.700" y="898" style="font-size:22px;fill:#7a7a7a;opacity:.5" textLength="187.300" lengthAdjust="spacingAndGlyphs">Activate Windows</text>
<text x="1554" y="925" style="font-size:16.500px;fill:#7a7a7a;opacity:.5" textLength="283" lengthAdjust="spacingAndGlyphs">Go to Settings to activate Windows.</text>
</svg>
</body></html>
